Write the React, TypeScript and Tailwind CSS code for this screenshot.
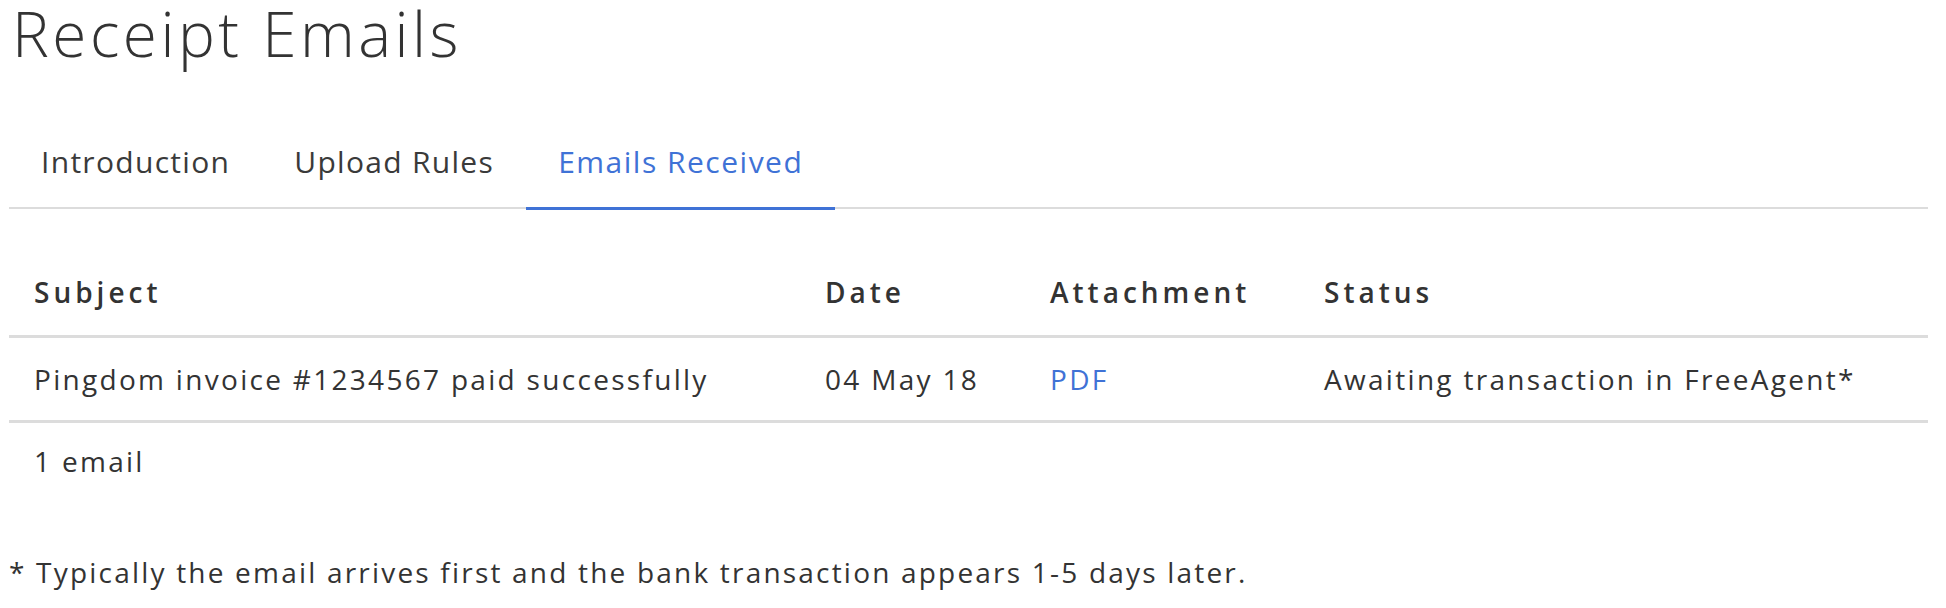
import React from "react";

export default function App() {
  const font = { fontFamily: '"Open Sans", "Noto Sans", sans-serif' };
  return (
    <div className="w-[1946px] h-[608px] bg-white text-[#333333] pl-[9px] pr-[18px]" style={font}>
      <h1 className="text-[62px] font-light leading-[76px] -mt-[5px] pl-[3px] tracking-[3.5px]">Receipt Emails</h1>
      <div className="mt-[65px] flex border-b-2 border-[#dcdcdc] h-[73px]">
        <div className="px-[32px] text-[30px] leading-[40px] pt-[6px] tracking-[1.3px] text-[#3a3a3a]">Introduction</div>
        <div className="px-[32px] text-[30px] leading-[40px] pt-[6px] tracking-[1.3px] text-[#3a3a3a]">Upload Rules</div>
        <div className="px-[32px] text-[30px] leading-[40px] pt-[6px] tracking-[1.5px] text-[#3f72d6] border-b-[3px] border-[#3f72d6] -mb-[2px] h-[74px]">Emails Received</div>
      </div>
      <table className="w-full border-collapse text-[28px] mt-[38px] tracking-[2.3px]">
        <thead>
          <tr className="border-b-[3px] border-[#dcdcdc]">
            <th className="w-[792px] text-left font-semibold tracking-[4px] pl-[25px] pt-[25px] pb-[23px] leading-[40px]">Subject</th>
            <th className="w-[225px] text-left font-semibold tracking-[4px] pl-[24px] pt-[25px] pb-[23px] leading-[40px]">Date</th>
            <th className="w-[274px] text-left font-semibold tracking-[4px] pl-[24px] pt-[25px] pb-[23px] leading-[40px]">Attachment</th>
            <th className="text-left font-semibold tracking-[4px] pl-[24px] pt-[25px] pb-[23px] leading-[40px]">Status</th>
          </tr>
        </thead>
        <tbody>
          <tr className="border-b-[3px] border-[#dcdcdc]">
            <td className="pl-[25px] py-[21px] leading-[40px]">Pingdom invoice #1234567 paid successfully</td>
            <td className="pl-[24px] py-[21px] leading-[40px]">04 May 18</td>
            <td className="pl-[24px] py-[21px] leading-[40px] text-[#3f72d6]">PDF</td>
            <td className="pl-[24px] py-[21px] leading-[40px]">Awaiting transaction in FreeAgent*</td>
          </tr>
        </tbody>
      </table>
      <div className="text-[28px] leading-[40px] pl-[25px] pt-[18px] tracking-[2.3px]">1 email</div>
      <div className="text-[28px] leading-[40px] pt-[71px] tracking-[2.2px]">* Typically the email arrives first and the bank transaction appears 1-5 days later.</div>
    </div>
  );
}
